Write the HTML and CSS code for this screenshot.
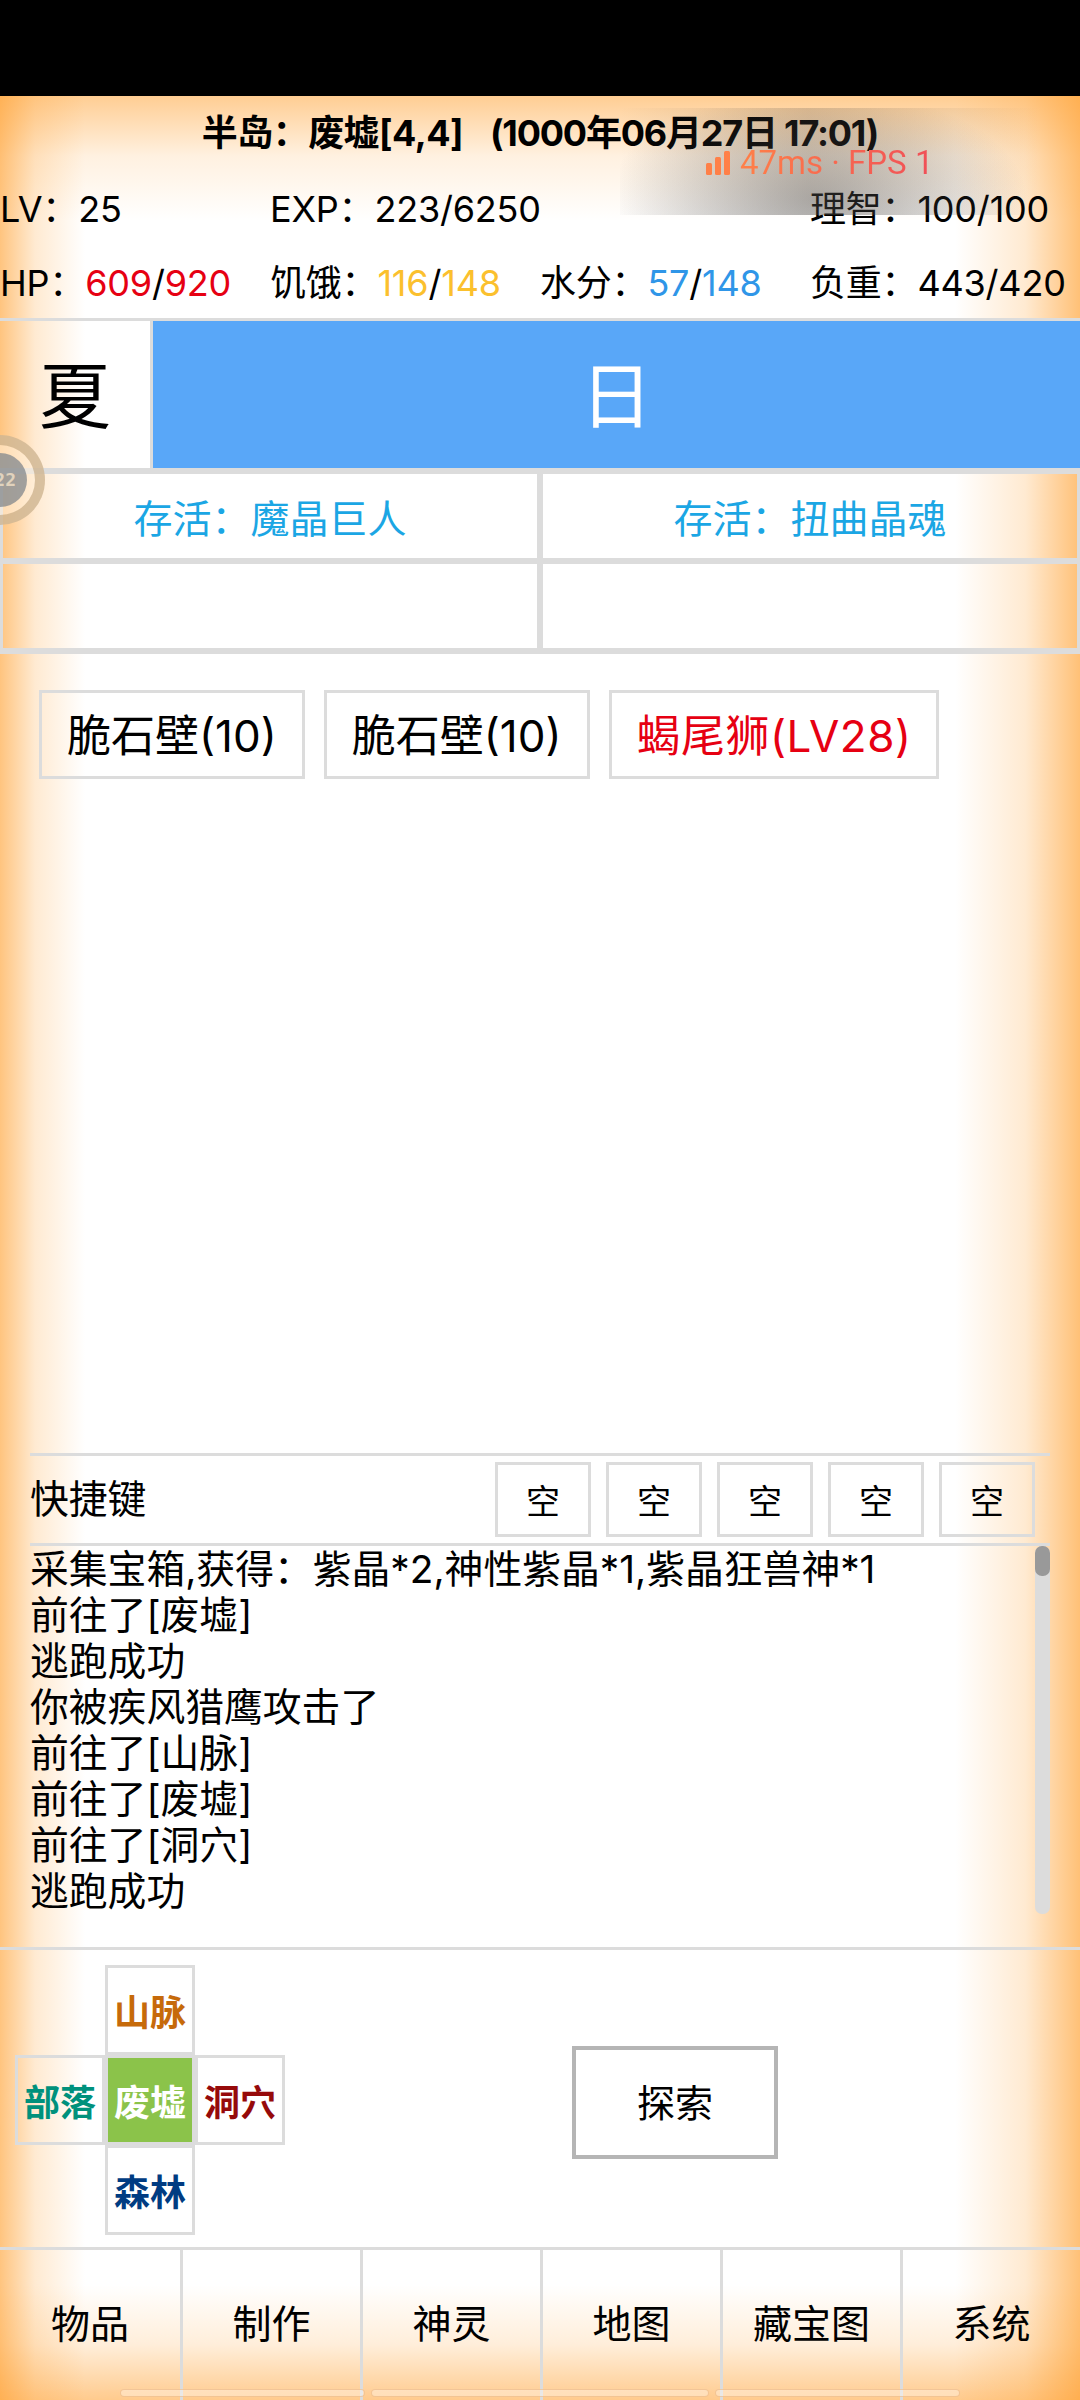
FILE: index.html
```html
<!DOCTYPE html>
<html lang="zh-CN">
<head>
<meta charset="utf-8">
<title>半岛</title>
<link rel="stylesheet" href="styles.css">
</head>
<body>
<div class="statusbar"></div>
<main class="page">
  <header class="header">
    <div class="title"><span class="title-place">半岛：废墟[4,4]</span><span class="title-date">(1000年06月27日 17:01)</span></div>
    <div class="stats">
      <span>LV：25</span>
      <span>EXP：223/6250</span>
      <span></span>
      <span>理智：100/100</span>
    </div>
    <div class="stats">
      <span>HP：<i class="red">609</i>/<i class="red">920</i></span>
      <span>饥饿：<i class="yellow">116</i>/<i class="yellow">148</i></span>
      <span>水分：<i class="blue">57</i>/<i class="blue">148</i></span>
      <span>负重：443/420</span>
    </div>
  </header>

  <section class="season">
    <div class="season-name">夏</div>
    <div class="season-time">日</div>
  </section>

  <section class="tasks">
    <div class="task">存活：魔晶巨人</div>
    <div class="task">存活：扭曲晶魂</div>
    <div class="task"></div>
    <div class="task"></div>
  </section>

  <section class="enemies">
    <button class="enemy">脆石壁(10)</button>
    <button class="enemy">脆石壁(10)</button>
    <button class="enemy enemy-boss">蝎尾狮(LV28)</button>
  </section>

  <section class="console">
    <div class="quick">
      <div class="quick-label">快捷键</div>
      <div class="quick-slots">
        <button class="slot">空</button>
        <button class="slot">空</button>
        <button class="slot">空</button>
        <button class="slot">空</button>
        <button class="slot">空</button>
      </div>
    </div>
    <div class="log-wrap">
      <div class="log">
        <div>采集宝箱,获得：紫晶*2,神性紫晶*1,紫晶狂兽神*1</div>
        <div>前往了[废墟]</div>
        <div>逃跑成功</div>
        <div>你被疾风猎鹰攻击了</div>
        <div>前往了[山脉]</div>
        <div>前往了[废墟]</div>
        <div>前往了[洞穴]</div>
        <div>逃跑成功</div>
      </div>
      <div class="track"><div class="thumb"></div></div>
    </div>
  </section>

  <section class="explore-area">
    <div class="map">
      <div class="cell cell-n">山脉</div>
      <div class="cell cell-w">部落</div>
      <div class="cell cell-c">废墟</div>
      <div class="cell cell-e">洞穴</div>
      <div class="cell cell-s">森林</div>
    </div>
    <button class="explore">探索</button>
  </section>

  <nav class="tabs">
    <div class="tab">物品</div>
    <div class="tab">制作</div>
    <div class="tab">神灵</div>
    <div class="tab">地图</div>
    <div class="tab">藏宝图</div>
    <div class="tab">系统</div>
  </nav>
</main>

<div class="net-overlay">
  <div class="net-line">
    <svg class="net-icon" viewBox="0 0 24 24" aria-hidden="true">
      <rect x="0" y="12" width="6" height="12" rx="1.5"/>
      <rect x="9" y="6" width="6" height="18" rx="1.5"/>
      <rect x="18" y="0" width="6" height="24" rx="1.5"/>
    </svg>
    <span class="net-text">47ms · FPS 1</span>
  </div>
</div>

<div class="float-ball"><div class="float-inner">22</div></div>

<div class="home-bars">
  <span class="home-bar home-bar-a"></span>
  <span class="home-bar home-bar-b"></span>
  <span class="home-bar home-bar-c"></span>
</div>
</body>
</html>
```

FILE: styles.css
```css
* { box-sizing: border-box; }

html, body {
  margin: 0;
  padding: 0;
  width: 1080px;
  height: 2400px;
  overflow: hidden;
  background: #fff;
}

body {
  position: relative;
  font-family: Inter, "Noto Sans CJK SC", sans-serif;
  font-size: 36px;
  color: #000;
  display: flex;
  flex-direction: column;
}

button {
  font: inherit;
  color: inherit;
  background: transparent;
  padding: 0;
  margin: 0;
}

i { font-style: normal; }

.statusbar { height: 96px; background: #000; flex: none; }

.page {
  flex: 1;
  display: flex;
  flex-direction: column;
  background:
    linear-gradient(to right, rgba(255, 160, 48, 0.62), rgba(255, 160, 48, 0.22) 35px, rgba(255, 160, 48, 0) 85px),
    linear-gradient(to left, rgba(255, 160, 48, 0.66), rgba(255, 160, 48, 0.22) 55px, rgba(255, 160, 48, 0) 125px),
    linear-gradient(to bottom, rgba(255, 160, 48, 0.52), rgba(255, 160, 48, 0.15) 60px, rgba(255, 160, 48, 0) 125px),
    linear-gradient(to top, rgba(255, 160, 48, 0.55), rgba(255, 160, 48, 0.18) 55px, rgba(255, 160, 48, 0) 115px),
    #fff;
}

.header { flex: none; }

.title {
  height: 74px;
  display: flex;
  align-items: center;
  justify-content: center;
  font-weight: 700;
  font-size: 36px;
  padding-bottom: 6px;
  white-space: nowrap;
}

.title-place { letter-spacing: -0.55px; }

.title-date { letter-spacing: -1.2px; margin-left: 27px; }

.stats {
  height: 74px;
  display: grid;
  grid-template-columns: repeat(4, 270px);
  align-items: center;
  padding-bottom: 2px;
  letter-spacing: -0.2px;
  white-space: nowrap;
}

.red { color: #e60012; }
.yellow { color: #fbc02d; }
.blue { color: #2f96e8; }

.season {
  flex: none;
  display: flex;
  height: 153px;
  border-top: 3px solid #dcdcdc;
  border-bottom: 3px solid #dcdcdc;
}

.season-name {
  width: 153px;
  border-right: 3px solid #dcdcdc;
  display: flex;
  align-items: center;
  justify-content: center;
  font-size: 72px;
  padding-bottom: 8px;
}

.season-time {
  flex: 1;
  display: flex;
  align-items: center;
  justify-content: center;
  background: #59a7f8;
  color: #fff;
  font-size: 72px;
  padding-bottom: 8px;
}

.tasks {
  flex: none;
  display: grid;
  grid-template-columns: 540px 540px;
  border-bottom: 3px solid #dcdcdc;
}

.task {
  height: 90px;
  border: 3px solid #dcdcdc;
  display: flex;
  align-items: center;
  justify-content: center;
  color: #1ba6e4;
  font-size: 39px;
}

.enemies {
  flex: 1;
  display: flex;
  align-items: flex-start;
  gap: 19px;
  padding: 36px 0 0 39px;
}

.enemy {
  height: 89px;
  padding: 0 25px 4px;
  border: 3px solid #dcdcdc;
  font-size: 44px;
  white-space: nowrap;
}

.enemy-boss { color: #e60012; letter-spacing: 0.5px; }

.console { flex: none; margin: 0 30px; height: 494px; }

.quick {
  height: 90px;
  border-top: 3px solid #dcdcdc;
  display: flex;
  align-items: center;
  justify-content: space-between;
  padding-right: 15px;
}

.quick-label { font-size: 38.8px; padding-bottom: 8px; }

.quick-slots { display: flex; gap: 15px; }

.slot {
  width: 96px;
  height: 75px;
  border: 3px solid #dcdcdc;
  font-size: 34px;
}

.log-wrap {
  display: flex;
  border-top: 3px solid #dcdcdc;
}

.log {
  flex: 1;
  font-size: 38.8px;
  line-height: 46px;
  white-space: nowrap;
}

.track {
  width: 15px;
  height: 368px;
  background: #dcdcdc;
  border-radius: 7px;
}

.thumb {
  height: 30px;
  background: #999;
  border-radius: 7px;
}

.explore-area {
  flex: none;
  height: 300px;
  border-top: 3px solid #dcdcdc;
  display: flex;
  align-items: center;
  padding-left: 15px;
}

.map {
  display: grid;
  grid-template-columns: repeat(3, 90px);
  grid-template-rows: repeat(3, 90px);
  margin-top: 3px;
}

.cell {
  border: 3px solid #dcdcdc;
  display: flex;
  align-items: center;
  justify-content: center;
  font-weight: 700;
  font-size: 36px;
}

.cell-n { grid-column: 2; grid-row: 1; color: #c66a0a; }
.cell-w { grid-column: 1; grid-row: 2; color: #00917c; }
.cell-c { grid-column: 2; grid-row: 2; color: #fff; background: #8bc34a; }
.cell-e { grid-column: 3; grid-row: 2; color: #960a0a; }
.cell-s { grid-column: 2; grid-row: 3; color: #003c82; }

.explore {
  width: 206px;
  height: 113px;
  margin: 7px 0 0 287px;
  padding-bottom: 4px;
  border: 4px solid #b5b5b5;
  font-size: 38px;
}

.tabs {
  flex: none;
  height: 153px;
  border-top: 3px solid #dcdcdc;
  display: grid;
  grid-template-columns: 183px repeat(4, 180px) 177px;
}

.tab {
  border-right: 3px solid #dcdcdc;
  display: flex;
  align-items: center;
  justify-content: center;
  font-size: 39px;
  padding-bottom: 8px;
}

.tab:last-child { border-right: 0; }

.net-overlay {
  position: absolute;
  left: 620px;
  top: 108px;
  width: 420px;
  height: 107px;
  background:
    radial-gradient(ellipse 210px 110px at 47% 85%, rgba(70, 70, 70, 0.36), rgba(70, 70, 70, 0) 100%),
    linear-gradient(to right, rgba(90, 80, 70, 0) 0%, rgba(90, 80, 70, 0.18) 45%, rgba(90, 80, 70, 0) 100%);
}

.net-line {
  position: absolute;
  left: 86px;
  top: 38px;
  display: flex;
  align-items: center;
  gap: 10px;
}

.net-icon { width: 24px; height: 24px; fill: #ff8048; display: block; }

.net-text {
  font-family: Roboto, sans-serif;
  font-size: 33px;
  line-height: 34px;
  white-space: nowrap;
  background: linear-gradient(to right, #ff8048, #f04f58);
  -webkit-background-clip: text;
  background-clip: text;
  color: transparent;
}

.float-ball {
  position: absolute;
  left: -45px;
  top: 435px;
  width: 90px;
  height: 90px;
  border-radius: 50%;
  border: 10px solid rgba(190, 160, 120, 0.6);
  display: flex;
  align-items: center;
  justify-content: center;
  background: rgba(255, 240, 220, 0.55);
}

.float-inner {
  width: 54px;
  height: 54px;
  border-radius: 50%;
  background: rgba(130, 135, 140, 0.75);
  display: flex;
  align-items: center;
  justify-content: flex-end;
  padding-right: 11px;
  font-family: "DejaVu Sans Mono", monospace;
  font-weight: 700;
  font-size: 18px;
  line-height: 1;
  color: rgba(255, 235, 205, 0.7);
  white-space: nowrap;
  overflow: hidden;
}

.home-bars {
  position: absolute;
  left: 120px;
  top: 2389px;
  display: flex;
  gap: 6px;
}

.home-bar {
  height: 8px;
  border-radius: 4px;
  background: rgba(255, 255, 255, 0.35);
  border: 1px solid rgba(230, 170, 110, 0.5);
}

.home-bar-a { width: 245px; }
.home-bar-b { width: 338px; }
.home-bar-c { width: 245px; }
```
